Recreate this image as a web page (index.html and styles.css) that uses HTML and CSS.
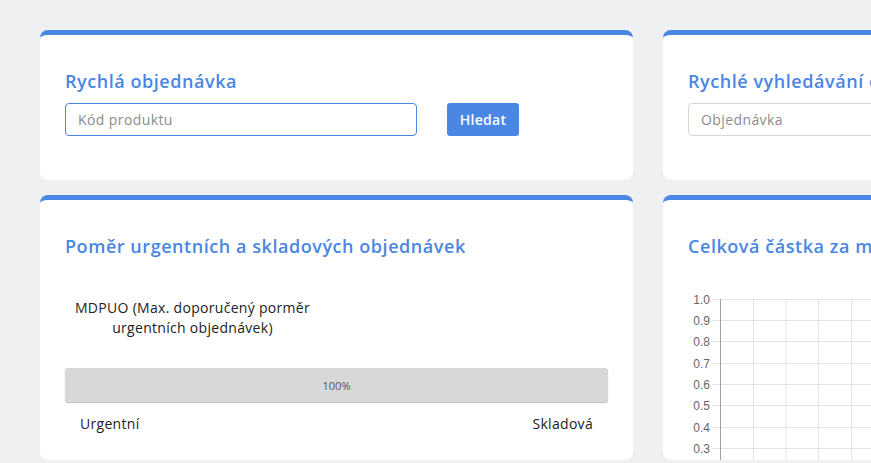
FILE: index.html
```html
<!DOCTYPE html>
<html lang="cs">
<head>
<meta charset="utf-8">
<title>Dashboard</title>
<link rel="stylesheet" href="styles.css">
</head>
<body>
<div class="grid">
  <section class="card card-small">
    <h2 class="card-title">Rychlá objednávka</h2>
    <div class="search-row">
      <input class="field field-active" type="text" placeholder="Kód produktu">
      <button class="btn">Hledat</button>
    </div>
  </section>
  <section class="card card-small">
    <h2 class="card-title">Rychlé vyhledávání objednávky</h2>
    <div class="search-row">
      <input class="field" type="text" placeholder="Objednávka">
      <button class="btn">Hledat</button>
    </div>
  </section>
  <section class="card card-big">
    <h2 class="card-title">Poměr urgentních a skladových objednávek</h2>
    <p class="note">MDPUO (Max. doporučený porměr urgentních objednávek)</p>
    <div class="bar"><span class="bar-text">100%</span></div>
    <div class="bar-labels"><span>Urgentní</span><span>Skladová</span></div>
  </section>
  <section class="card card-big">
    <h2 class="card-title">Celková částka za měsíc</h2>
    <svg class="chart" width="540" height="180" viewBox="0 0 540 180">
      <g class="grid-h">
        <line x1="24" y1="5.5" x2="540" y2="5.5"/>
        <line x1="24" y1="26.5" x2="540" y2="26.5"/>
        <line x1="24" y1="47.5" x2="540" y2="47.5"/>
        <line x1="24" y1="69.5" x2="540" y2="69.5"/>
        <line x1="24" y1="90.5" x2="540" y2="90.5"/>
        <line x1="24" y1="111.5" x2="540" y2="111.5"/>
        <line x1="24" y1="133.5" x2="540" y2="133.5"/>
        <line x1="24" y1="154.5" x2="540" y2="154.5"/>
        <line x1="24" y1="175.5" x2="540" y2="175.5"/>
      </g>
      <g class="grid-v">
        <line x1="65.5" y1="5" x2="65.5" y2="180"/>
        <line x1="98" y1="5" x2="98" y2="180"/>
        <line x1="130.5" y1="5" x2="130.5" y2="180"/>
        <line x1="163.5" y1="5" x2="163.5" y2="180"/>
        <line x1="196.5" y1="5" x2="196.5" y2="180"/>
      </g>
      <line class="axis" x1="32.5" y1="5" x2="32.5" y2="180"/>
      <g class="ticks">
        <text x="22" y="9.5">1.0</text>
        <text x="22" y="30.5">0.9</text>
        <text x="22" y="51.5">0.8</text>
        <text x="22" y="73.5">0.7</text>
        <text x="22" y="94.5">0.6</text>
        <text x="22" y="115.5">0.5</text>
        <text x="22" y="137.5">0.4</text>
        <text x="22" y="158.5">0.3</text>
      </g>
    </svg>
  </section>
</div>
</body>
</html>
```
FILE: styles.css
```css
html, body {
  margin: 0;
  padding: 0;
}
body {
  background: #eef0f2;
  overflow: hidden;
  font-family: "Open Sans", "Noto Sans", sans-serif;
  letter-spacing: 0.3px;
  color: #222;
}
.grid {
  display: grid;
  grid-template-columns: 593px 593px;
  grid-template-rows: 150px 265px;
  gap: 15px 30px;
  padding: 30px 0 0 40px;
  width: max-content;
}
.card {
  background: #fff;
  border-top: 5px solid #4a86e3;
  border-radius: 8px;
  padding: 35px 25px 0 25px;
  box-sizing: border-box;
}
.card-title {
  margin: 0;
  font-size: 18px;
  letter-spacing: 0.55px;
  line-height: 23px;
  font-weight: 600;
  color: #4a86e3;
  white-space: nowrap;
}
.search-row {
  display: flex;
  gap: 30px;
  margin-top: 10px;
}
.field {
  width: 352px;
  height: 33px;
  box-sizing: border-box;
  border: 1px solid #d6d6d6;
  border-radius: 4px;
  padding: 0 12px;
  font-family: inherit;
  font-size: 14px;
  letter-spacing: 0.4px;
  color: #333;
  outline: none;
}
.field::placeholder {
  color: #8c8c8c;
}
.field-active {
  border-color: #4a86e3;
}
.btn {
  height: 33px;
  width: 72px;
  border: none;
  border-radius: 3px;
  background: #4a86e3;
  color: #fff;
  font-family: inherit;
  font-size: 14px;
  letter-spacing: 0.3px;
  font-weight: 600;
  padding: 0;
}
.note {
  width: 255px;
  margin: 40px 0 0 0;
  text-align: center;
  font-size: 14px;
  line-height: 20px;
  color: #222;
}
.bar {
  margin-top: 30px;
  height: 34px;
  background: #d8d8d8;
  border-radius: 3px;
  box-shadow: 0 1px 1px rgba(0,0,0,0.25);
  display: flex;
  align-items: center;
  justify-content: center;
}
.bar-text {
  font-size: 11px;
  letter-spacing: 0;
  color: #555;
}
.bar-labels {
  display: flex;
  justify-content: space-between;
  padding: 12px 15px 0 15px;
  font-size: 14px;
  color: #222;
}
.chart {
  display: block;
  margin-top: 36px;
  margin-left: 0;
  overflow: visible;
}
.grid-h line, .grid-v line {
  stroke: #e3e3e3;
  stroke-width: 1;
}
.axis {
  stroke: #a0a0a0;
  stroke-width: 1;
}
.ticks text {
  font-family: "Liberation Sans", Arial, sans-serif;
  font-size: 12px;
  letter-spacing: 0;
  fill: #666;
  text-anchor: end;
}
```
